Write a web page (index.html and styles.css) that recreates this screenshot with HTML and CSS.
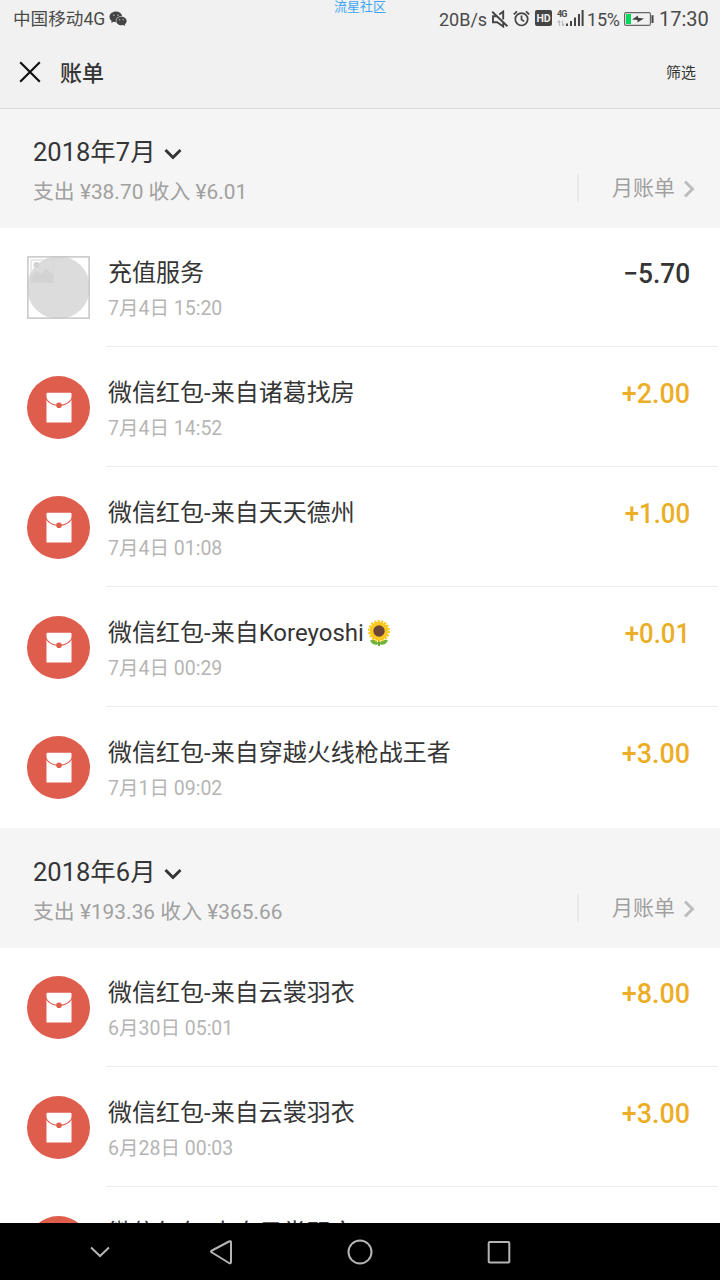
FILE: index.html
```html
<!DOCTYPE html>
<html lang="zh-CN">
<head>
<meta charset="utf-8">
<title>账单</title>
<link rel="stylesheet" href="styles.css">
</head>
<body>
<svg class="defs" width="0" height="0">
  <symbol id="packet" viewBox="0 0 63 63">
    <circle cx="31.5" cy="31.5" r="31.5" fill="#de5d4c"/>
    <path d="M20.500 16.800h23q1 0 1 1v28.700h-25V17.800q0-1 1-1z" fill="#fff"/>
    <path d="M19 21q3 7.500 13 8 10-.5 13-8v2.500q-4 6-13 6.500-9-.5-13-6.500z" fill="#de5d4c"/>
    <circle cx="32" cy="29.300" r="2.800" fill="#de5d4c"/>
  </symbol>
  <symbol id="down" viewBox="0 0 18 12"><path d="M1.500 2l7.500 7.500L16.500 2" fill="none" stroke="#353535" stroke-width="3"/></symbol>
  <symbol id="right" viewBox="0 0 12 18"><path d="M2 1.500L9.500 9 2 16.500" fill="none" stroke="#bdbdbd" stroke-width="2.900"/></symbol>
</svg>
<div class="screen">
  <div class="watermark">流星社区</div>
  <header class="top">
    <div class="status">
      <span class="carrier">中国移动4G</span>
      <svg class="wechat" width="18" height="16" viewBox="0 0 18 16">
        <path d="M7 .5C3.300.5.500 2.900.500 5.900c0 1.700.9 3.100 2.200 4.100L2.200 12l2.300-1.200 2.500.4a5 5 0 0 1-.2-1.300c0-2.600 2.500-4.700 5.600-4.700h.8C12.600 2.500 10.100.5 7 .5z" fill="#444"/>
        <path d="M12.400 5.800c-2.900 0-5.100 1.800-5.100 4.200s2.200 4.300 5.100 4.300l1.900-.3 1.900 1-.4-1.700c1.100-.8 1.800-2 1.800-3.300 0-2.400-2.300-4.200-5.200-4.200z" fill="#444"/>
        <path d="M4.800 3.600v1.500M9 3.600v1.500M10.600 8v1.200M14.200 8v1.200" stroke="#bbb" stroke-width="1.100"/>
      </svg>
      <span class="speed">20B/s</span>
      <svg class="mute" width="18" height="18" viewBox="0 0 18 18">
        <path d="M6.500 6.200H2v6h4.200l6 4.300v-4M8.300 4.600l3.900-3v7.800M1.200 1.800l15.200 14.400" fill="none" stroke="#444" stroke-width="1.900"/>
      </svg>
      <svg class="alarm" width="17" height="17" viewBox="0 0 17 17">
        <g fill="none" stroke="#444" stroke-width="1.700"><circle cx="8.500" cy="9.300" r="6.200"/><path d="M8.500 5.600v4l2.700 1.800M.8 4.300L4 1.300M16.200 4.300L13 1.300"/></g>
      </svg>
      <span class="hd">HD</span>
      <span class="signal"><span class="net">4G</span>
        <svg width="27" height="18" viewBox="0 0 27 18">
          <path d="M2.500 17v-5M.8 13.500L2.500 11.500M5.500 11.500v5M7.200 15l-1.700 2" stroke="#bbb" stroke-width="1.200"/>
          <path d="M10 14.500v2.500M14 12v5M18 8.500V17M22 5v12M25.600 1v16" stroke="#444" stroke-width="2"/>
        </svg>
      </span>
      <span class="pct">15%</span>
      <svg class="battery" width="30" height="14" viewBox="0 0 30 14">
        <rect x=".6" y=".6" width="25.800" height="12.800" rx="1.500" fill="none" stroke="#666" stroke-width="1.200"/>
        <rect x="2" y="2" width="5" height="10" fill="#00d95a"/>
        <path d="M8 7.500L14 3.500v2.300l6 .7-6.500 4V8z" fill="#444"/>
        <rect x="27.500" y="3.200" width="2" height="7.800" fill="#444"/>
      </svg>
      <span class="clock">17:30</span>
    </div>
    <nav class="bar">
      <svg class="close" width="22" height="22" viewBox="0 0 22 22"><path d="M1.200 1.200l19.600 19.600M20.800 1.200L1.200 20.800" stroke="#111" stroke-width="2.200"/></svg>
      <h1 class="heading">账单</h1>
      <span class="filter">筛选</span>
    </nav>
  </header>
  <main class="bills">
    <section>
      <div class="month july">
        <div class="summary">
          <div class="date">2018年7月<svg class="arrow" width="18" height="12"><use href="#down"/></svg></div>
          <div class="totals">支出 ¥38.70 收入 ¥6.01</div>
        </div>
        <div class="more"><span>月账单</span><svg class="go" width="12" height="18"><use href="#right"/></svg></div>
      </div>
      <article class="row">
        <svg class="avatar" viewBox="0 0 63 63">
          <circle cx="31.500" cy="31.500" r="31.500" fill="#dcdcdc"/>
          <rect x=".9" y=".9" width="61.200" height="61.200" fill="none" stroke="#c6c6c6" stroke-width="1.500"/>
          <rect x="4" y="4" width="22.500" height="22.500" fill="none" stroke="#d6d6d6" stroke-width="1"/>
          <circle cx="9.500" cy="9" r="3" fill="#d2d2d2"/>
          <path d="M4 26.500V21l5.500-6 4.500 3 5-5.500 7.500 7v7z" fill="#d2d2d2"/>
        </svg>
        <div class="info"><div class="line"><span class="name">充值服务</span><span class="amount out">−5.70</span></div><div class="time">7月4日 15:20</div></div>
      </article>
      <article class="row"><svg class="avatar"><use href="#packet"/></svg>
        <div class="info"><div class="line"><span class="name">微信红包-来自诸葛找房</span><span class="amount">+2.00</span></div><div class="time">7月4日 14:52</div></div></article>
      <article class="row"><svg class="avatar"><use href="#packet"/></svg>
        <div class="info"><div class="line"><span class="name">微信红包-来自天天德州</span><span class="amount slim">+1.00</span></div><div class="time">7月4日 01:08</div></div></article>
      <article class="row"><svg class="avatar"><use href="#packet"/></svg>
        <div class="info"><div class="line"><span class="name">微信红包-来自Koreyoshi<svg class="flower" width="24" height="28" viewBox="0 0 24 28">
          <path d="M12 18v9" stroke="#5fa637" stroke-width="2"/>
          <path d="M12 25C9 20 5 20.500 3 21.500c1.500 4 6 5 9 3.500 3 1.500 7.500.5 9-3.500-2-1-6-1.500-9 3.500z" fill="#6fb33f"/>
          <circle cx="12" cy="12" r="9.300" fill="#fbc820"/>
          <circle cx="12" cy="12" r="9.700" fill="none" stroke="#fbc820" stroke-width="2.600" stroke-dasharray="2.100 1.285"/>
          <circle cx="12" cy="12" r="5.700" fill="#6b4638"/>
        </svg></span><span class="amount slim">+0.01</span></div><div class="time">7月4日 00:29</div></div></article>
      <article class="row last"><svg class="avatar"><use href="#packet"/></svg>
        <div class="info"><div class="line"><span class="name">微信红包-来自穿越火线枪战王者</span><span class="amount">+3.00</span></div><div class="time">7月1日 09:02</div></div></article>
    </section>
    <section>
      <div class="month">
        <div class="summary">
          <div class="date">2018年6月<svg class="arrow" width="18" height="12"><use href="#down"/></svg></div>
          <div class="totals">支出 ¥193.36 收入 ¥365.66</div>
        </div>
        <div class="more"><span>月账单</span><svg class="go" width="12" height="18"><use href="#right"/></svg></div>
      </div>
      <article class="row"><svg class="avatar"><use href="#packet"/></svg>
        <div class="info"><div class="line"><span class="name">微信红包-来自云裳羽衣</span><span class="amount">+8.00</span></div><div class="time">6月30日 05:01</div></div></article>
      <article class="row"><svg class="avatar"><use href="#packet"/></svg>
        <div class="info"><div class="line"><span class="name">微信红包-来自云裳羽衣</span><span class="amount">+3.00</span></div><div class="time">6月28日 00:03</div></div></article>
      <article class="row"><svg class="avatar"><use href="#packet"/></svg>
        <div class="info"><div class="line"><span class="name">微信红包-来自云裳羽衣</span><span class="amount slim">+1.00</span></div></div></article>
    </section>
  </main>
  <footer class="keys">
    <svg width="720" height="57" viewBox="0 0 720 57" fill="none" stroke="#b4b4b4" stroke-width="2">
      <path d="M91 24.500l9 8.500 9-8.500"/>
      <path d="M229 18.500q2-1 2 1v19.500q0 2-2 1l-17-10.500q-2-1 0-2z"/>
      <circle cx="360" cy="29" r="11.500"/>
      <rect x="488.700" y="19" width="20.600" height="20.500" rx="1"/>
    </svg>
  </footer>
</div>
</body>
</html>
```

FILE: styles.css
```css
* { box-sizing: border-box; }
body { margin: 0; font-family: Roboto, "Noto Sans CJK SC", sans-serif; background: #fff; }
.defs { display: none; }
.screen { position: relative; width: 720px; height: 1280px; overflow: hidden; display: flex; flex-direction: column; }
.watermark { position: absolute; top: -2px; left: 334px; font-size: 13px; line-height: 17px; color: #3ea6f5; }
.top { flex: none; height: 109px; background: #f1f1f1; border-bottom: 1px solid #d9d9d9; }
.status { height: 38px; display: flex; align-items: center; color: #4a4a4a; white-space: nowrap; }
.carrier { margin: -3px 0 0 13px; width: 96px; font-size: 17.600px; }
.wechat { margin-top: -1px; }
.speed { margin-left: auto; font-size: 18px; width: 51px; }
.mute { margin-left: 1px; }
.alarm { margin: -2px 0 0 4px; }
.hd { margin: -2px 0 0 5px; width: 17px; height: 16px; border-radius: 2px; background: #444; color: #f1f1f1; font-size: 10.500px; font-weight: 700; line-height: 17px; text-align: center; }
.signal { margin: -2px 0 0 5px; width: 27px; height: 18px; position: relative; }
.signal svg { display: block; }
.net { position: absolute; top: 0; left: 0; font-size: 9px; line-height: 10px; font-weight: 700; letter-spacing: -.8px; }
.pct { margin-left: 3px; width: 34px; font-size: 18px; letter-spacing: -.2px; }
.battery { margin-left: 3px; }
.clock { margin: 0 12px 0 5px; width: 49px; font-size: 20px; }
.bar { height: 68px; display: flex; align-items: center; padding: 0 24px 0 19px; }
.heading { margin: -3px auto 0 19px; font-size: 22px; font-weight: 500; color: #353535; }
.filter { margin-top: -1px; font-size: 15px; color: #353535; }
.bills { flex: 1; min-height: 0; overflow: hidden; }
.month { height: 120px; display: flex; justify-content: space-between; background: #f5f5f5; padding: 24px 25px 0 33px; white-space: nowrap; }
.month.july { height: 119px; padding-top: 23px; }
.date { display: flex; align-items: center; height: 34px; font-size: 25.500px; color: #353535; }
.arrow { margin: 9px 0 0 8px; }
.totals { height: 40px; line-height: 52px; font-size: 20.800px; color: #a0a0a0; letter-spacing: .05px; }
.more { margin-top: 42px; height: 28px; width: 118px; padding-left: 33px; border-left: 2px solid #e9e9e9; display: flex; align-items: center; justify-content: space-between; font-size: 21px; line-height: 28px; color: #a0a0a0; }
.go { margin-top: 2px; }
.row { display: flex; height: 120px; padding-left: 27px; }
.avatar { flex: none; width: 63px; height: 63px; margin-top: 28.400px; }
.info { flex: 1; margin: 0 2px 1px 16px; padding: 25px 28px 0 2px; border-bottom: 1px solid #ededed; }
.last .info { border-bottom-color: transparent; }
.line { display: flex; justify-content: space-between; height: 40px; line-height: 40px; white-space: nowrap; }
.name { font-size: 24px; color: #353535; }
.flower { margin-left: 3px; vertical-align: -6px; }
.amount { line-height: 41px; font-size: 28px; font-weight: 500; color: #ecae27; transform: scaleX(.96); transform-origin: right; }
.slim { transform: scaleX(.92); }
.out { color: #353535; transform: scaleX(.94); }
.time { line-height: 32px; font-size: 19.500px; color: #b5b5b5; }
.keys { flex: none; height: 57px; background: #000; }
.keys svg { display: block; }
```
